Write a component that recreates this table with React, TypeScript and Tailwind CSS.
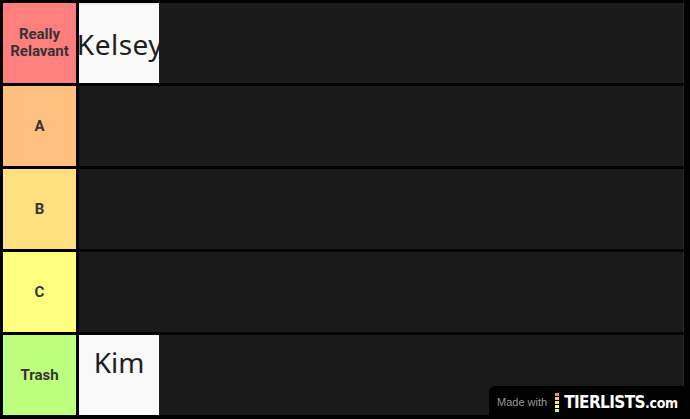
import React from "react";

const tiers = [
  { label: "Really Relavant", color: "bg-[#ff7f7f]", item: "Kelsey" },
  { label: "A", color: "bg-[#ffbf7f]", item: null },
  { label: "B", color: "bg-[#ffdf7f]", item: null },
  { label: "C", color: "bg-[#ffff7f]", item: null },
  { label: "Trash", color: "bg-[#bfff7f]", item: "Kim" },
];

export default function App() {
  return (
    <div className="relative w-[690px] h-[419px] bg-black overflow-hidden pt-[3px] pl-[3px] pr-[6px]" style={{ fontFamily: "Roboto, 'Liberation Sans', sans-serif" }}>
      <div className="flex flex-col gap-[3px]">
        {tiers.map((t) => (
          <div key={t.label} className="flex h-[80px] gap-[3px]">
            <div className={`${t.color} w-[73px] flex items-center justify-center text-center text-[15px] leading-[17px] font-bold text-[#333]`}>
              {t.label === "Really Relavant" ? (
                <span>Really<br />Relavant</span>
              ) : (
                t.label
              )}
            </div>
            <div className="flex-1 bg-[#1a1a1a] border-r border-[#2a2a2a] flex">
              {t.item === "Kelsey" && (
                <div className="w-[80px] h-[80px] bg-[#f9f9f9] border-t-2 border-[#ececec] overflow-hidden flex items-center justify-center">
                  <span className="text-[28px] text-[#1e1e1e] whitespace-nowrap tracking-[0.5px] pl-[2px]" style={{ fontFamily: "'Noto Sans', 'Open Sans', sans-serif" }}>Kelsey</span>
                </div>
              )}
              {t.item === "Kim" && (
                <div className="w-[80px] h-[80px] bg-[#f9f9f9] overflow-hidden flex justify-center pt-[9px]">
                  <span className="text-[28px] leading-[36px] text-[#1e1e1e]" style={{ fontFamily: "'Noto Sans', 'Open Sans', sans-serif" }}>Kim</span>
                </div>
              )}
            </div>
          </div>
        ))}
      </div>
      <div className="absolute right-0 bottom-0 w-[201px] h-[33px] bg-black rounded-tl-[6px] flex items-center pl-[8px] whitespace-nowrap">
        <span className="text-[11px] text-[#9a9a9a] whitespace-nowrap mr-[8px]" style={{ fontFamily: "'Liberation Sans', sans-serif" }}>Made with</span>
        <div className="flex flex-col gap-[1px] shrink-0 mr-[5px]">
          <div className="w-[4px] h-[3px] bg-[#ff7f7f]" />
          <div className="w-[4px] h-[3px] bg-[#ffbf7f]" />
          <div className="w-[4px] h-[3px] bg-[#ffdf7f]" />
          <div className="w-[4px] h-[3px] bg-[#ffff7f]" />
          <div className="w-[4px] h-[3px] bg-[#bfff7f]" />
        </div>
        <span className="text-white font-bold flex items-baseline whitespace-nowrap" style={{ fontFamily: "'DejaVu Sans Condensed', 'DejaVu Sans', sans-serif" }}>
          <span className="text-[17px] font-black tracking-[-0.6px]">TIERLISTS</span>
          <span className="text-[14px] tracking-[-0.3px]">.com</span>
        </span>
      </div>
    </div>
  );
}
